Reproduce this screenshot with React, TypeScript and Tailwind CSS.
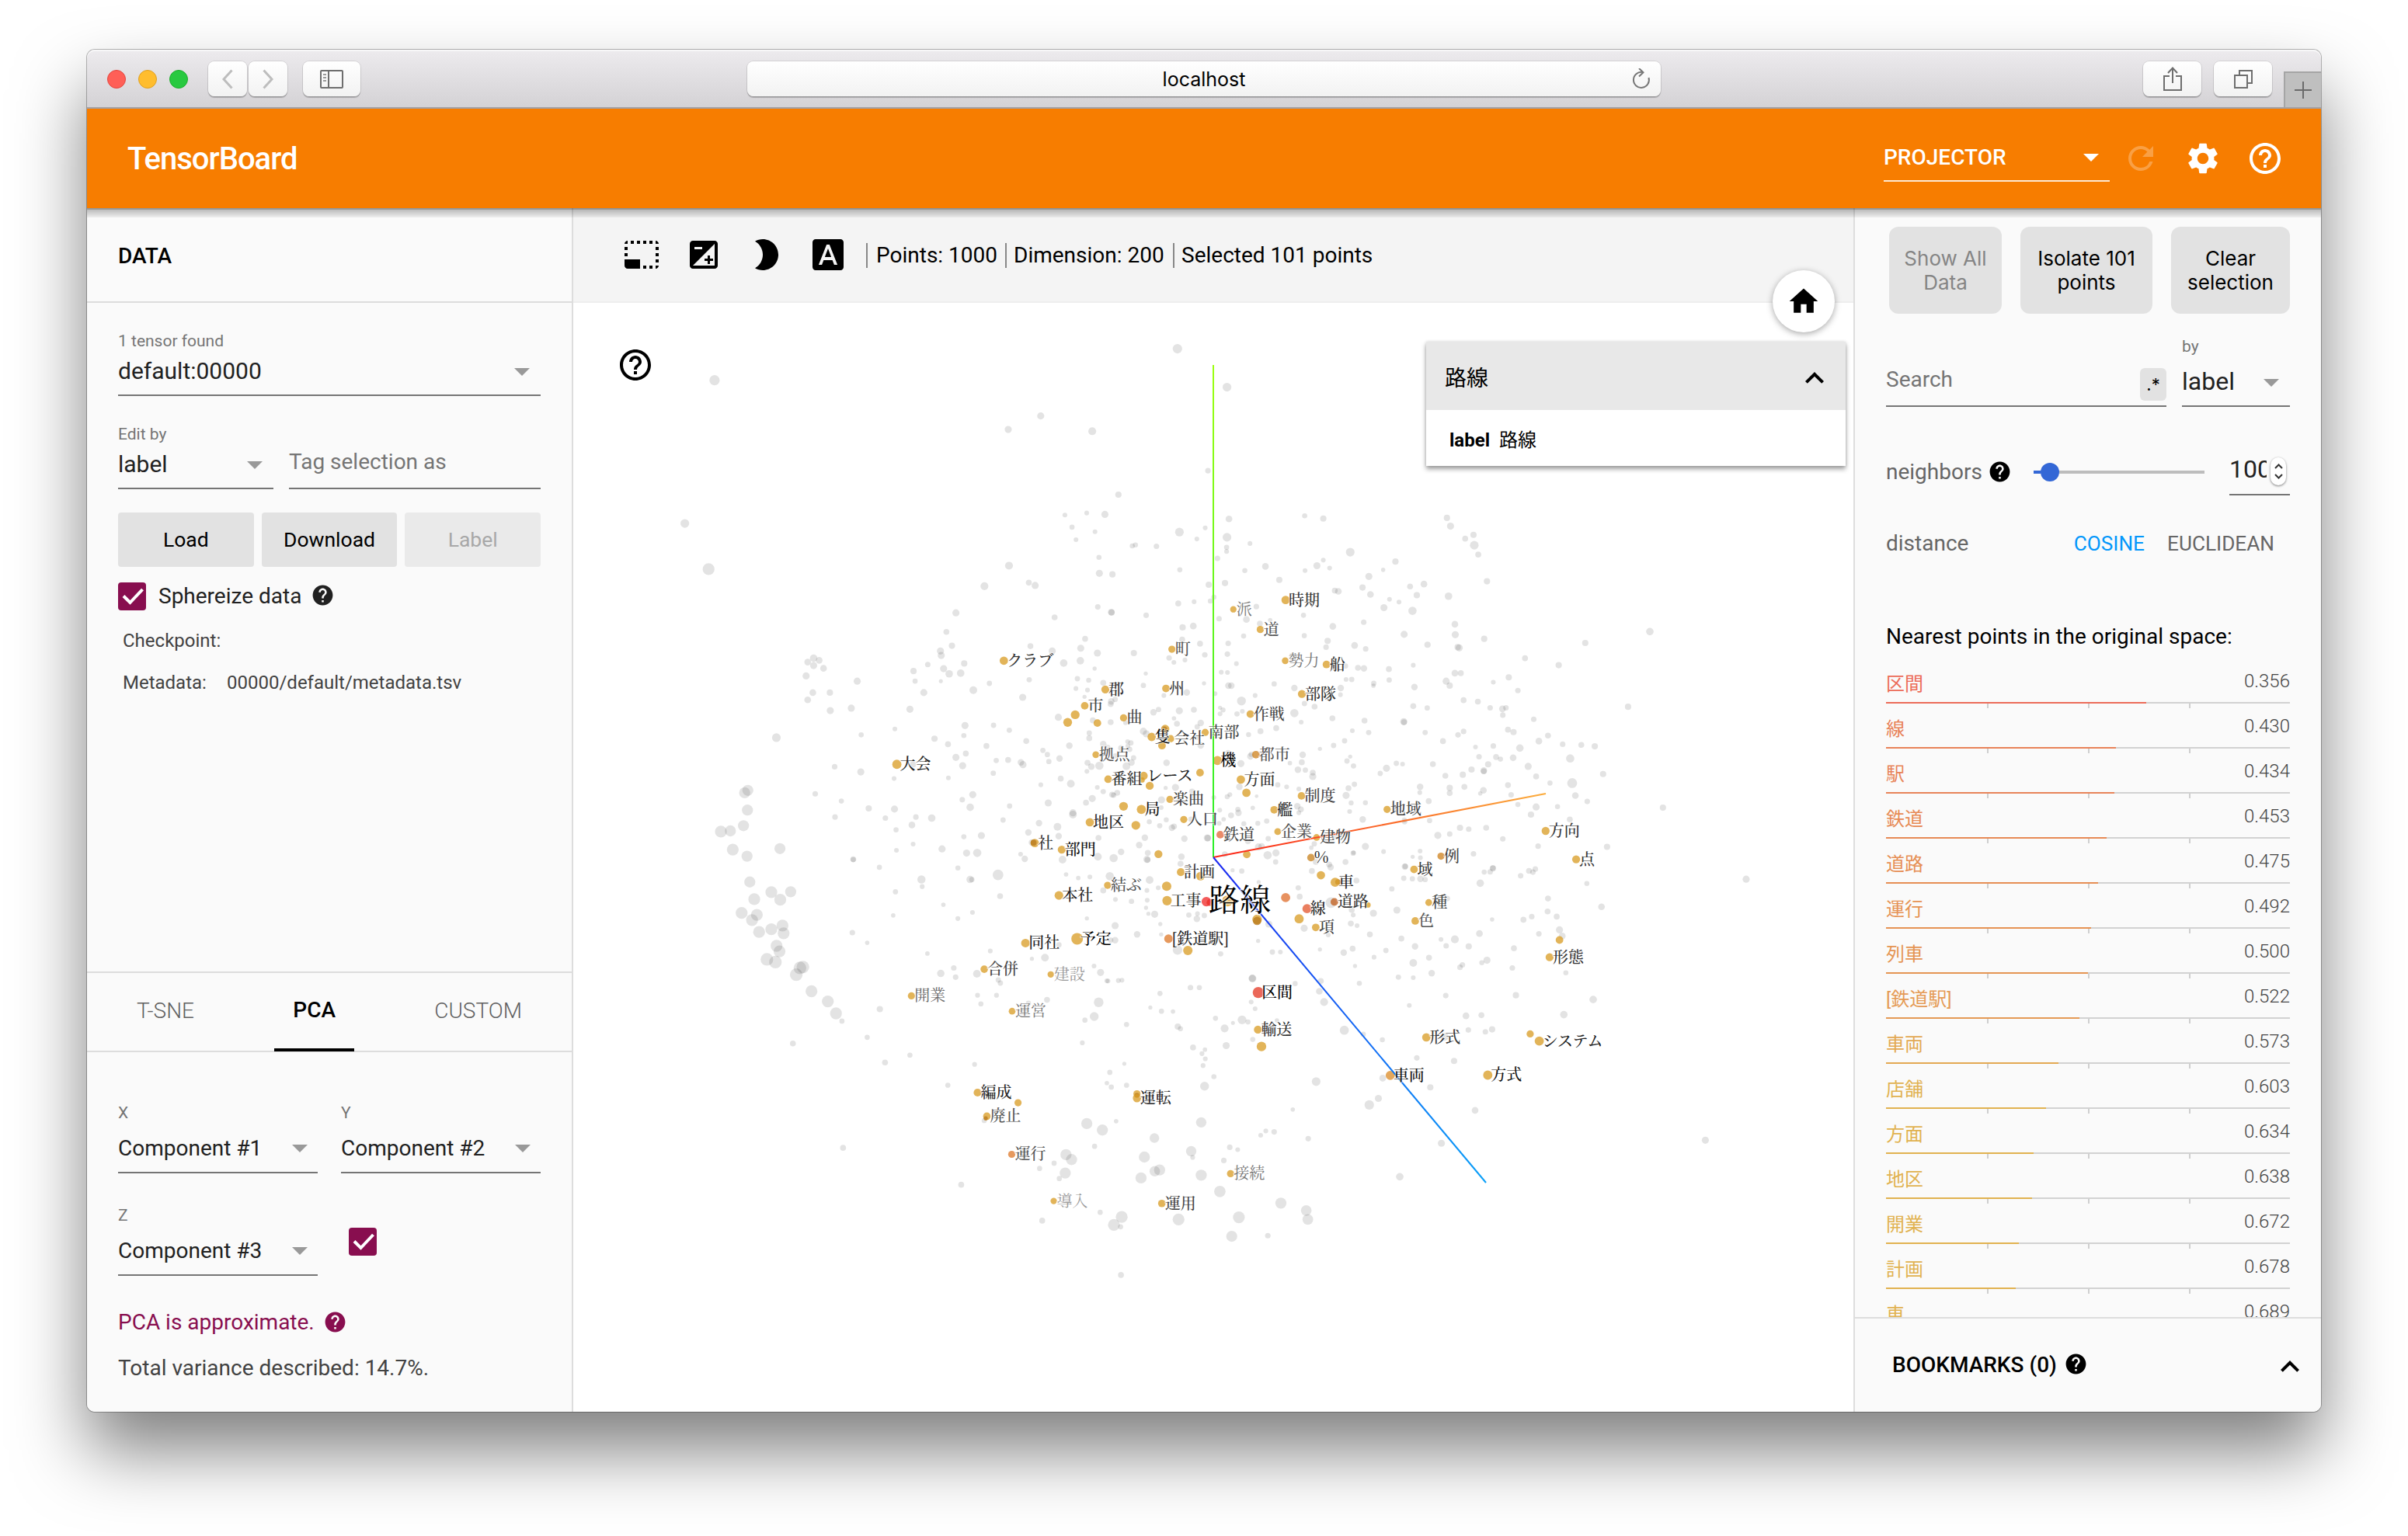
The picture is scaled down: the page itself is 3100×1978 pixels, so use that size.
import type { ReactNode } from 'react';
import {
  MdBrightness2,
  MdExpandLess,
  MdExposure,
  MdFontDownload,
  MdHelp,
  MdHelpOutline,
  MdHome,
  MdPhotoSizeSelectSmall,
  MdRefresh,
  MdSettings,
} from 'react-icons/md';

/* ---------- Scatter data ---------- */

// A region of the scene: its origin, its horizontal and vertical scale,
// its background points as "x,y,diameter" and its highlighted points.
type Mark = [x: number, y: number, d: number, text?: string, ink?: string, fill?: string];
type Region = { ox: number; oy: number; sx: number; sy: number; points: string; marks: Mark[] };

const GOLD = '#d99e27';
const DEEP = '#b97a1e';

const REGIONS: Region[] = [
  {
    ox: 850, oy: 420, sx: 1.96, sy: 2.24,
    points: `1305,65,24 137,156,26 960,259,18 878,298,18 1090,303,20 62,569,22 122,701,30 1156,486,16 1122,543,18 1076,539,12 1021,545,12
      1039,580,13 1097,593,12 1049,616,12 1310,594,22 1354,614,12 1252,635,14 1199,631,13 1191,634,13 1107,667,13 880,691,20 1108,713,18
      1141,716,16 1311,703,13 818,750,20 930,740,15 946,748,18 746,827,18 1104,810,14 1138,825,17 1139,826,16 1307,800,15 1347,795,12
      1226,834,14 995,840,15 722,882,15 736,922,16 707,937,18 709,950,18 1072,902,15 934,923,15 989,937,18 1061,929,18 1103,943,18
      1195,943,16 1318,869,16 1345,865,17 1317,904,15 1362,916,15 1284,957,14 1296,970,12 1324,963,12 1018,972,19 1060,965,19
      387,958,19 401,964,17 372,969,17 387,979,18 412,987,17 368,1009,18 497,1024,18 385,1057,17 428,1057,16 372,1078,17 482,1102,18
      429,1109,18 639,995,16 643,1024,13 675,976,14 715,988,18 729,1003,19 758,1001,19 767,973,16 708,1024,10 665,1057,18 630,1105,18
      592,1162,12 507,1179,13 293,1187,22 692,1190,16 726,1206,15 769,1152,18 766,1181,13 440,1271,14 506,1286,18 638,1264,16 590,1305,12
      746,1244,18 771,1233,15 763,1268,18 727,1303,12 391,1349,14 457,1370,13 526,1391,16 591,1393,18 441,1416,14 568,1419,14 645,1416,14
      685,1419,19 635,1439,17 595,1453,13 762,1366,14 782,1388,19 638,1494,12 596,1512,12 766,1473,13 711,1508,18 773,1520,18 553,1561,13
      487,1538,15 487,1539,13 751,1563,13 221,1339,28 213,1346,28 220,1396,28 210,1441,28 177,1456,28 153,1458,30 183,1510,30 302,1507,28
      219,1529,28`,
    marks: [
      [867, 965, 20, 'クラブ', '#333'], [1291, 932, 17, '町', '#555'], [1123, 1048, 19, '郡', '#333'], [1276, 1045, 18, '州', '#444'],
      [1071, 1095, 18, '市', '#444'], [1047, 1121, 21], [1028, 1143, 21], [1103, 1145, 18], [1169, 1130, 17, '曲', '#444'],
      [1274, 1162, 20], [1272, 1164, 15, '', '', DEEP], [1288, 1190, 17, '会社', '#444'], [1266, 1210, 18], [1240, 1185, 20, '隻', '#111'],
      [1099, 1236, 16, '拠点', '#555'], [597, 1264, 22, '大会', '#222'], [1216, 1309, 12], [1130, 1307, 18, '番組', '#333'],
      [1220, 1297, 19, 'レース', '#222'], [1235, 1326, 19], [1362, 1288, 18], [1286, 1365, 17, '楽曲', '#444'], [1169, 1385, 21],
      [1214, 1394, 22, '局', '#111'], [1084, 1431, 20, '地区', '#222'], [1200, 1440, 21], [1321, 1423, 17, '人口', '#444'],
      [945, 1491, 20, '社', '#333'], [942, 1490, 14, '', '', DEEP], [1013, 1510, 19, '部門', '#111'], [1257, 1523, 19],
    ],
  },
  {
    ox: 1550, oy: 420, sx: 1.96, sy: 2.24,
    points: `58,176,22 10,417,14 63,556,17 254,547,13 301,555,16 3,582,12 58,609,22 57,638,13 57,650,12 116,627,12 34,670,14 369,652,22
      155,693,17 103,705,13 285,691,18 301,675,12 317,698,12 255,705,12 483,679,16 452,703,11 416,722,18 190,732,16 12,746,16 53,741,16
      330,763,15 339,765,17 400,754,16 420,774,17 520,751,15 555,744,17 537,776,16 468,788,12 492,796,12 454,812,18 526,821,21 613,553,16
      622,577,18 659,613,15 680,602,16 682,632,22 692,659,15 714,736,16 617,779,19 25,782,13 16,793,13 132,809,14 38,844,14 107,846,17
      167,848,11 251,834,13 403,854,14 141,858,15 325,866,17 100,894,13 253,893,13 505,889,18 633,860,17 634,890,18 707,902,16 61,915,14
      312,908,16 308,926,14 380,921,17 408,931,14 564,919,16 640,926,16 644,928,18 59,946,14 2,948,14 962,914,16 1125,881,19
      810,958,15 895,978,16 633,1001,17 648,1001,15 769,1013,16 730,1027,12 611,1024,18 620,1037,16 792,1051,14 655,1079,15 691,1083,15
      1070,1098,16 722,1101,14 753,1104,17 762,1101,14 754,1122,14 832,1134,14 655,1169,14 641,1179,14 767,1164,15 781,1171,16 603,1197,15
      868,1181,15 845,1197,17 905,1206,14 952,1208,15 986,1212,16 685,1214,12 730,1211,14 797,1217,19 694,1242,14 737,1243,15 748,1249,13
      780,1245,17 717,1264,16 924,1247,21 818,1270,18 675,1279,16 706,1282,17 706,1284,15 653,1294,16 609,1297,15 838,1299,15 1007,1292,16
      873,1318,13 929,1318,25 767,1324,15 657,1329,15 620,1332,16 620,1347,15 705,1339,17 697,1348,11 775,1352,14 937,1354,17 967,1371,14
      792,1380,13 838,1387,18 892,1386,13 1158,1389,16 825,1409,16 923,1423,15 646,1447,16 668,1451,14 712,1447,15 620,1465,14 590,1469,18
      754,1479,14 843,1500,14 1017,1502,16 680,1522,14 729,1563,14`,
    marks: [
      [206, 790, 20, '時期', '#333'], [74, 817, 15, '派', '#777'], [142, 875, 17, '道', '#555'], [205, 965, 16, '勢力', '#777'],
      [309, 976, 18, '船', '#333'], [247, 1061, 19, '部隊', '#333'], [117, 1119, 18, '作戦', '#444'], [131, 1236, 18, '都市', '#555', '#cf8420'],
      [93, 1308, 20, '方面', '#333'], [107, 1346, 20], [246, 1355, 18, '制度', '#444'], [177, 1395, 18, '艦', '#222'],
      [462, 1394, 17, '地域', '#444'], [186, 1458, 16, '企業', '#555'], [284, 1475, 16, '建物', '#444'],
      [41, 1467, 18, '鉄道', '#444', '#e4683a'], [862, 1456, 19, '方向', '#333'], [939, 1538, 19, '点', '#333'],
      [598, 1529, 17, '例', '#444', '#cf8420'], [108, 1524, 18], [270, 1533, 18, '%', '#222', '#c98420'], [3, 1172, 17, '南部', '#444'],
      [34, 1253, 22, '機', '#000'],
    ],
  },
  {
    ox: 1250, oy: 850, sx: 2.6133, sy: 3,
    points: `62,90,18 416,33,14 196,76,18 588,52,14 174,144,24 8,116,26 358,72,18 396,78,17 353,110,16 445,88,20 392,116,16 472,160,22
      485,152,18 470,170,20 294,221,24 382,142,14 580,98,18 726,125,22 649,137,16 614,202,22 631,191,18 701,196,24 750,192,20 683,225,15
      693,246,20 773,243,22 761,258,18 410,233,20 470,240,20 520,242,16 784,90,14 842,47,16 863,48,16 866,99,22 876,99,22 821,130,16
      910,158,30 893,14,16 956,137,16 838,184,14 848,193,17 838,208,16 895,208,18 913,198,16 1020,92,18 1088,108,22 1122,168,18 1156,180,20
      1088,205,28 1111,240,16 1027,263,20 974,275,20 934,288,17 1244,108,22 1243,134,16 1222,30,20 1260,23,18 1281,75,18 1262,75,16
      1302,30,20 1322,32,22 1406,35,20 1407,77,18 1488,20,16 1492,104,22 1355,90,18 1354,99,15 1488,178,20 1535,185,18 1324,234,20
      1216,225,20 1456,238,24 1457,240,20 1528,280,18 1283,273,16 1338,280,18 1257,312,18 1220,330,18 76,252,18 129,271,18 398,282,18
      398,302,20 445,325,22 186,313,20 52,332,20 580,275,24 590,285,24 538,320,18 527,315,16 528,332,16 534,345,18 505,340,20 460,337,18
      242,349,18 257,365,18 331,331,22 298,380,22 85,388,18 125,386,20 168,395,22 175,404,24 75,437,18 262,392,18 392,397,20 405,412,22
      432,408,28 390,430,16 523,410,26 540,396,22 547,378,18 486,370,18 658,397,22 865,360,22 881,372,18 943,364,18 940,372,22 908,400,24
      875,395,16 773,330,22 760,300,16 1174,343,14 1116,366,22 1113,395,20 1100,424,22 1150,450,24 1125,425,18 1150,435,20 1073,398,15
      1276,373,14 1265,390,18 1287,409,18 1377,438,18 1398,418,24 1431,399,18 1452,402,16 1554,402,20 1511,490,22 1510,512,16 235,482,16
      302,458,20 336,478,26 655,494,14 688,492,24 6,520,24 130,564,18 260,552,24 387,551,20 343,590,24 343,597,26 408,535,24 425,492,16
      445,508,18 475,520,20 480,522,18 492,513,20 641,540,24 640,570,16 700,540,18 744,508,20 746,531,18 817,531,16 862,528,17 871,520,16
      903,490,22 1032,482,18 1103,498,16 1062,490,16 1290,480,18 1270,495,20 1262,523,24 1279,552,17 1327,551,17 1274,585,16 1318,616,22
      1430,580,16 1458,618,17 1459,625,18 1540,545,20 1543,620,18 961,526,12 948,571,15 837,580,16 898,577,18 900,590,22 875,600,20
      850,615,15 918,632,17 965,631,17 835,631,16 1098,565,22 1110,577,20 1103,590,16 995,622,18 108,618,18 229,630,22 291,644,26
      193,666,22 35,678,24 295,680,22 167,750,16 181,768,22 21,745,28 205,705,22 429,687,20 427,760,26 480,765,28 505,741,22 566,715,22
      585,686,22 600,625,17 657,617,17 676,648,22 683,643,20 718,690,22 795,687,24 797,688,22 740,615,18 635,640,18 308,771,26 592,770,24
      594,772,20 595,745,20 708,760,22 705,787,20 91,830,36 320,828,15 361,842,15 400,838,16 467,835,28 601,850,26 3,848,18 854,750,20
      932,700,20 967,722,24 978,720,22 998,754,28 880,812,14 911,815,18 1026,745,24 1025,780,18 1000,690,18 1068,687,16 1155,710,18
      1160,780,20 1131,664,18 1145,725,15 1228,680,22 1327,720,24 1286,746,18 1287,744,15 1388,740,16 1205,790,20 1210,800,22 1147,815,20
      1460,798,22 1461,797,18 1486,760,14 1512,764,16 1511,738,16 1456,843,18 1485,845,18 1512,845,22 1528,848,18 1260,780,20 98,912,20
      5,975,16 445,890,20 486,925,16 540,932,18 592,890,16 630,880,16 593,928,16 589,957,14 597,980,14 618,982,24 968,858,14 966,945,16
      1101,880,18 1106,914,20 1297,852,20 1211,937,36 1281,965,20 1278,1018,20 1299,1026,16 1286,985,16 1354,978,24 1433,966,24 1416,884,18
      1396,1122,18 762,980,16 733,985,18 760,1000,22 785,987,18 1002,1020,24 966,1085,14 637,1020,14 640,1060,14 559,1060,22 485,1026,24
      485,1082,22 470,1082,18 296,1100,18 390,998,14 65,1124,16 205,1154,14 249,1150,26 20,1212,26 92,1236,18 99,1248,18 436,1207,24
      414,1182,16 461,1240,16 508,1237,16 695,1120,32 840,1135,18 1121,1036,24 1174,1118,14 1202,1062,16 1014,1128,18 1041,1128,16
      1284,1115,20 1254,1130,22 1356,1148,16 1342,1060,20 1448,1076,20 1494,1106,22 1488,1170,26 1292,1182,14 1488,1227,16 1550,1210,22
      947,1230,26 1177,1240,20 1438,1225,18 1541,1150,20`,
    marks: [],
  },
  {
    ox: 850, oy: 1080, sx: 2.0907, sy: 2.529,
    points: `241,141,30 253,197,32 299,174,32 323,199,32 351,173,30 219,242,32 247,265,32 260,248,32 266,304,32 299,295,32 329,283,32
      332,308,32 313,349,32 321,367,32 287,393,34 310,402,34 376,421,34 384,418,34 366,443,34 407,497,32 451,530,32 473,569,32 703,133,22
      705,156,13 834,133,20 633,173,14 762,215,12 801,260,13 627,250,12 517,306,15 557,339,12 719,374,12 790,421,15 795,451,15 755,439,20
      591,555,17 489,594,14 357,667,16 557,647,14 605,729,16 672,705,14 774,803,14 492,1007,16 810,1127,16 846,735,13 854,510,13 863,538,14
      905,510,13 991,536,14 1041,525,16 1180,533,26 1168,579,24 1143,591,14 1255,605,14 1345,504,14 1427,485,15 1451,485,14 1319,550,11
      1349,562,14 1380,563,12 1393,612,17 1400,619,14 1136,665,13 1434,680,16 1466,687,12 1458,700,13 1467,717,13 1461,739,13 1249,733,11
      1210,761,14 1202,796,12 1214,809,14 1255,803,14 1465,806,24 1148,928,30 1190,949,30 1227,920,12 1330,975,26 1456,924,28 1092,1029,30
      1107,1045,30 1169,1002,14 1060,1057,14 1021,1074,14 1090,1089,30 1074,1107,14 1303,1037,30 1344,1079,30 1331,1083,28 1294,1105,30
      1429,1018,28 1433,1038,13 1456,1096,30 1184,1217,14 1242,1232,32 1221,1258,32 1239,1264,14 1028,1244,16 1395,1240,32 1240,1421,16
      872,918,14 1233,462,13 1202,463,13`,
    marks: [
      [1454, 122, 22], [1401, 109, 20, '計画', '#333'], [1204, 152, 18, '結ぶ', '#555'], [1073, 185, 22, '本社', '#222'], [1363, 155, 24],
      [1364, 202, 24, '工事', '#333'], [983, 340, 22, '同社', '#222'], [1122, 326, 30, '予定', '#000'],
      [1368, 326, 22, '[鉄道駅]', '#222', '#de7a2c'], [1420, 364, 24], [872, 425, 19, '合併', '#444'], [1051, 442, 16, '建設', '#999'],
      [676, 512, 18, '開業', '#666'], [947, 562, 17, '運営', '#777'], [854, 827, 20, '編成', '#222'], [963, 860, 18],
      [879, 904, 19, '廃止', '#555'], [876, 911, 10, '', '', DEEP], [1283, 831, 18], [1283, 836, 12, '', '', DEEP],
      [1283, 845, 21, '運転', '#222'], [946, 1028, 18, '運行', '#555', '#de7a2c'], [1059, 1180, 16, '導入', '#999'],
      [1350, 1188, 19, '運用', '#444'],
    ],
  },
  {
    ox: 1500, oy: 1080, sx: 1.96, sy: 2.529,
    points: `805,109,13 827,97,16 820,108,14 918,105,15 934,99,14 928,109,14 897,121,14 795,145,19 1064,146,13 1466,132,18 966,195,15
      965,237,15 1101,222,17 925,254,14 904,264,15 825,263,11 988,254,15 995,297,18 1002,317,17 793,309,17 943,310,14 731,328,20 696,328,12
      709,349,14 766,351,16 880,357,15 812,396,18 799,404,13 750,411,14 744,419,14 876,421,14 712,195,14 1011,437,13 885,510,16 708,511,14
      1080,524,19 389,497,17 401,532,20 217,532,12 227,554,12 616,543,12 759,577,17 798,575,15 1006,573,19 194,590,22 209,597,13 171,600,10
      282,592,11 127,585,13 150,618,20 452,624,23 500,637,13 548,655,13 221,654,13 154,674,18 765,623,14 808,629,14 825,621,16 705,645,20
      635,714,14 729,724,16 669,810,16 549,780,17 782,885,17 381,791,22 538,846,18 515,867,24 123,775,13 322,882,11 254,952,12 275,955,14
      241,966,12 361,977,14 697,992,18 592,1101,19 1363,982,18 163,1005,14 183,1013,12 148,1048,14 138,1149,29 292,1187,28 356,1211,27
      360,1240,27 186,1233,30 168,1295,28 259,1293,14 220,455,18 328,472,13 490,471,13`,
    marks: [
      [628, 100, 18, '域', '#333'], [393, 119, 20], [436, 141, 13, '', '', DEEP], [429, 142, 22, '車', '#222'],
      [512, 216, 12], [427, 206, 18, '道路', '#333', '#c25f1c'], [665, 208, 16, '種', '#444'], [631, 268, 18, '色', '#555'],
      [304, 192, 22, '', '', '#e0702f'], [358, 228, 22, '線', '#222', '#e4582f'], [338, 261, 22], [380, 289, 18, '項', '#444'],
      [232, 263, 23], [232, 268, 20, '', '', DEEP], [995, 330, 18], [970, 386, 19, '形態', '#333'],
      [235, 501, 27, '区間', '#000', '#e53b27'], [234, 622, 19, '輸送', '#333'], [243, 677, 23], [659, 647, 20, '形式', '#333'],
      [921, 636, 17], [944, 659, 22, 'システム', '#222'], [568, 771, 22, '車両', '#111', '#dc8d2a'], [814, 770, 22, '方式', '#111'],
      [157, 203, 26], [113, 208, 16, '', '', '#d8431a'], [104, 205, 23, '', '', '#f02a2a'], [165, 1091, 17, '接続', '#777'],
    ],
  },
];

function Scatter() {
  return (
    <svg className="absolute inset-0 size-full" viewBox="738 390 1648 1428">
      <defs>
        <linearGradient id="axis-y" gradientUnits="userSpaceOnUse" x1="1562" y1="1104" x2="1562" y2="470">
          <stop offset="0" stopColor="#28ee28" />
          <stop offset="1" stopColor="#9cff10" />
        </linearGradient>
        <linearGradient id="axis-x" gradientUnits="userSpaceOnUse" x1="1562" y1="1104" x2="1990" y2="1022">
          <stop offset="0" stopColor="#fb2418" />
          <stop offset="1" stopColor="#fbac3c" />
        </linearGradient>
        <linearGradient id="axis-z" gradientUnits="userSpaceOnUse" x1="1562" y1="1104" x2="1913" y2="1523">
          <stop offset="0" stopColor="#1c28f0" />
          <stop offset="1" stopColor="#0aa0f8" />
        </linearGradient>
      </defs>
      <g fill="#000" fillOpacity={0.11}>
        {REGIONS.map((r) =>
          r.points.trim().split(/\s+/).map((p, i) => {
            const [x, y, d] = p.split(',').map(Number);
            return <circle key={`${r.ox}-${r.oy}-${i}`} cx={r.ox + x / r.sx} cy={r.oy + y / r.sy} r={d / r.sx / 2} />;
          }),
        )}
      </g>
      <g fillOpacity={0.77}>
        {REGIONS.map((r) =>
          r.marks.map(([x, y, d, , , fill], i) => (
            <circle key={`${r.ox}-${r.oy}-${i}`} cx={r.ox + x / r.sx} cy={r.oy + y / r.sy} r={d / r.sx / 2 + 0.3} fill={fill || GOLD} />
          )),
        )}
      </g>
      <g strokeWidth={2} fill="none">
        <path d="M1562 1104V470" stroke="url(#axis-y)" />
        <path d="M1562 1104L1990 1022" stroke="url(#axis-x)" />
        <path d="M1562 1104L1913 1523" stroke="url(#axis-z)" />
      </g>
      <g
        className="font-[family-name:'Noto_Serif_CJK_JP','Noto_Serif_JP',serif]"
        fontSize={20}
        stroke="#fff"
        strokeOpacity={0.6}
        strokeWidth={2}
        paintOrder="stroke"
      >
        {REGIONS.map((r) =>
          r.marks.map(([x, y, , text, ink], i) =>
            text ? (
              <text
                key={`${r.ox}-${r.oy}-${i}`}
                x={r.ox + x / r.sx + 4}
                y={r.oy + y / r.sy + 7}
                fill={ink}
                className={ink === '#777' || ink === '#999' || ink === '#666' ? 'font-normal' : 'font-medium'}
              >
                {text}
              </text>
            ) : null,
          ),
        )}
        <text x={1556} y={1172.5} fontSize={40} fill="#000" strokeWidth={3}>
          路線
        </text>
      </g>
    </svg>
  );
}

/* ---------- Small pieces ---------- */

function Caret({ className = 'text-[#999]' }: { className?: string }) {
  return (
    <svg width="20" height="10" viewBox="0 0 20 10" className={`shrink-0 ${className}`} fill="currentColor">
      <path d="M0 0h20L10 10z" />
    </svg>
  );
}

function Checkbox() {
  return (
    <span className="flex size-9 shrink-0 items-center justify-center rounded-[4px] bg-[#880e4f]">
      <svg width="36" height="36" viewBox="0 0 36 36" fill="none" stroke="#fff" strokeWidth="4">
        <path d="M7 17.500l8.500 8.500L31.500 9" />
      </svg>
    </span>
  );
}

function TallField({ label, value, className = '' }: { label: string; value: string; className?: string }) {
  return (
    <div className={`flex flex-col ${className}`}>
      <div className="text-[21px] leading-6 text-[#757575]">{label}</div>
      <div className="flex h-[59px] items-center justify-between border-b-2 border-[#757575] pr-[14px] pb-[5px] text-[30px] text-[#212121]">
        <span>{value}</span>
        <Caret className="mt-[3px] text-[#999]" />
      </div>
    </div>
  );
}

function AxisField({ label, value }: { label: string; value: string }) {
  return (
    <div className="flex w-[257px] flex-col">
      <div className="text-[21px] leading-6 text-[#757575]">{label}</div>
      <div className="flex h-[66px] items-center justify-between border-b-2 border-[#757575] pt-1 pr-[13px] text-[28px] text-[#212121]">
        <span>{value}</span>
        <Caret />
      </div>
    </div>
  );
}

function GreyButton({ children, disabled = false }: { children: ReactNode; disabled?: boolean }) {
  return (
    <button
      className={`flex h-[70px] flex-1 items-center justify-center rounded-[4px] text-[26.5px] ${
        disabled ? 'bg-[#eaeaea] text-[#a8a8a8]' : 'bg-[#e2e2e2] text-black'
      }`}
    >
      {children}
    </button>
  );
}

function ChromeButton({ children, className }: { children: ReactNode; className: string }) {
  return (
    <span
      className={`flex h-[45px] items-center justify-center rounded-[8px] bg-gradient-to-b from-white to-[#f2f2f2] shadow-[0_0_0_1px_rgba(0,0,0,0.09),0_2px_1px_rgba(0,0,0,0.22)] ${className}`}
    >
      {children}
    </span>
  );
}

/* ---------- Window chrome ---------- */

function TitleBar() {
  return (
    <div className="flex h-[76px] shrink-0 items-start rounded-t-[10px] border-b-2 border-[#a2a0a5] bg-gradient-to-b from-[#edebee] to-[#d4d2d5] shadow-[inset_0_2px_0_rgba(255,255,255,0.6)]">
      <div className="flex h-full w-[850px] items-start pt-[15px] pl-[26px]">
        <div className="flex h-[45px] items-center gap-4">
          <span className="size-6 rounded-full border border-[#e2463f] bg-[#ff5f57]" />
          <span className="size-6 rounded-full border border-[#dfa023] bg-[#ffbd2e]" />
          <span className="size-6 rounded-full border border-[#1dad2b] bg-[#28c940]" />
        </div>
        <div className="ml-[26px] flex gap-[2px]">
          <ChromeButton className="w-[50px]">
            <svg width="14" height="26" viewBox="0 0 14 26" fill="none" stroke="#bdbdbd" strokeWidth="3">
              <path d="M12.500 1.500L2 13l10.500 11.500" />
            </svg>
          </ChromeButton>
          <ChromeButton className="w-[50px]">
            <svg width="14" height="26" viewBox="0 0 14 26" fill="none" stroke="#bdbdbd" strokeWidth="3">
              <path d="M1.500 1.500L12 13 1.500 24.500" />
            </svg>
          </ChromeButton>
        </div>
        <ChromeButton className="ml-5 w-[74px]">
          <svg width="30" height="24" viewBox="0 0 30 24" fill="none" stroke="#6e6e6e" strokeWidth="2">
            <rect x="1" y="1" width="28" height="22" rx="1" />
            <path d="M11 1v22" />
            <path d="M4 6h4M4 10h4M4 14h4" stroke="#9a9a9a" />
          </svg>
        </ChromeButton>
      </div>
      <ChromeButton className="relative mt-[15px] w-[1176px] font-[family-name:Inter,sans-serif] text-[25px] text-black">
        <span className="pt-[2px]">localhost</span>
        <svg className="absolute right-3 top-[9px]" width="26" height="28" viewBox="0 0 26 28" fill="none" stroke="#767676" strokeWidth="2">
          <path d="M14.500 5A10 10 0 1 0 22.500 12" />
          <path d="M10 0l5.500 5.200L10 10.500" />
        </svg>
      </ChromeButton>
      <div className="flex h-full w-[850px] justify-end pt-[15px]">
        <ChromeButton className="w-[75px]">
          <svg width="24" height="32" viewBox="0 0 24 32" fill="none" stroke="#6e6e6e" strokeWidth="2">
            <path d="M8 12H1v18h22V12h-7" />
            <path d="M12 21V2M6 8l6-6.500L18 8" />
          </svg>
        </ChromeButton>
        <ChromeButton className="mr-[15px] ml-4 w-[75px]">
          <svg width="26" height="26" viewBox="0 0 26 26" fill="none" stroke="#6e6e6e" strokeWidth="2">
            <rect x="2" y="8" width="16" height="16" />
            <path d="M8 7V2h16v16h-5" />
          </svg>
        </ChromeButton>
        <div className="mt-[13px] flex h-[46px] w-12 items-center justify-center border-t-2 border-l-2 border-[#a5a5a5] bg-[#bfbfbf]">
          <svg width="22" height="22" viewBox="0 0 22 22" stroke="#6a6a6a" strokeWidth="2">
            <path d="M11 0v22M0 11h22" />
          </svg>
        </div>
      </div>
    </div>
  );
}

function AppHeader() {
  return (
    <header className="flex h-32 shrink-0 items-center justify-between bg-[#f77d00] pr-12 pl-[52px] text-white">
      <h1 className="pt-[1px] text-[40px] leading-none font-medium tracking-[-0.025em]">TensorBoard</h1>
      <div className="flex h-full items-start">
        <div className="mt-[34px] flex h-[60px] w-[291px] items-center justify-between border-b-2 border-[#fde9d3] pr-[14px]">
          <span className="text-[28px] font-medium">PROJECTOR</span>
          <Caret className="-mt-px text-white" />
        </div>
        <div className="mt-10 ml-4 flex gap-8 text-[48px]">
          <MdRefresh className="opacity-[0.27]" />
          <MdSettings />
          <MdHelpOutline />
        </div>
      </div>
    </header>
  );
}

/* ---------- Left panel ---------- */

function LeftPanel() {
  return (
    <aside className="flex w-[626px] shrink-0 flex-col border-r-2 border-[#ddd] bg-[#fafafa]">
      <div className="flex h-[122px] shrink-0 items-center border-b-2 border-[#ddd] pt-[3px] pl-10 text-[28px] font-medium text-black">
        DATA
      </div>
      <div className="flex flex-col px-10 pt-[37px]">
        <TallField label="1 tensor found" value="default:00000" />
        <div className="mt-[37px] flex items-end gap-5">
          <TallField label="Edit by" value="label" className="w-[200px]" />
          <div className="flex h-[59px] flex-1 items-center border-b-2 border-[#757575] pb-[10px] text-[28px] text-[#757575]">
            Tag selection as
          </div>
        </div>
        <div className="mt-[30px] flex gap-[10px]">
          <GreyButton>Load</GreyButton>
          <GreyButton>Download</GreyButton>
          <GreyButton disabled>Label</GreyButton>
        </div>
        <div className="mt-5 flex h-9 items-center text-[28px] text-[#212121]">
          <Checkbox />
          <span className="ml-4">Sphereize data</span>
          <MdHelp className="mt-[-3px] ml-[12px] text-[31px]" />
        </div>
        <div className="mt-[25px] flex flex-col gap-[26px] pl-[6px] text-[24px] leading-7 text-[#424242]">
          <div>Checkpoint:</div>
          <div className="flex">
            <span className="w-[134px]">Metadata:</span>
            <span>00000/default/metadata.tsv</span>
          </div>
        </div>
      </div>
      <div className="mt-auto flex h-[104px] items-stretch justify-between border-y-2 border-[#ddd] px-10 text-[28px] font-light text-[#616161]">
        <div className="flex items-center px-6 pb-[2px]">T-SNE</div>
        <div className="-mb-px flex items-center border-b-4 border-black px-6 pb-[2px] font-medium text-black">PCA</div>
        <div className="flex items-center px-6 pb-[2px]">CUSTOM</div>
      </div>
      <div className="flex flex-col px-10 pt-[66px] pb-[41px]">
        <div className="flex justify-between">
          <AxisField label="X" value="Component #1" />
          <AxisField label="Y" value="Component #2" />
        </div>
        <div className="mt-[42px] flex gap-10">
          <AxisField label="Z" value="Component #3" />
          <div className="mt-7">
            <Checkbox />
          </div>
        </div>
        <div className="mt-[45px] flex items-center text-[28px] leading-[30px] text-[#880e4f]">
          PCA is approximate.
          <MdHelp className="mt-[-2px] ml-[11px] text-[31px]" />
        </div>
        <div className="mt-[29px] text-[28px] leading-[30px] text-[#424242]">Total variance described: 14.7%.</div>
      </div>
    </aside>
  );
}

/* ---------- Projector stage ---------- */

function Stage() {
  return (
    <main className="relative flex w-[1648px] shrink-0 flex-col bg-white">
      <div className="flex h-[122px] shrink-0 items-center border-b-2 border-[#eee] bg-[#f4f4f4] pl-16 text-[28px] text-black">
        <div className="flex gap-8 text-[48px]">
          <MdPhotoSizeSelectSmall />
          <MdExposure />
          <MdBrightness2 />
          <MdFontDownload />
        </div>
        <div className="ml-[25px] flex items-center pt-px">
          <span className="h-8 border-l-2 border-[#888] pr-[11px]" />
          <span className="w-[166px]">Points: 1000</span>
          <span className="h-8 border-l-2 border-[#888] pr-[9px]" />
          <span className="w-[205px]">Dimension: 200</span>
          <span className="h-8 border-l-2 border-[#888] pr-[9px]" />
          <span>Selected 101 points</span>
        </div>
      </div>
      <div className="relative flex-1">
        <Scatter />
        <MdHelpOutline className="absolute top-14 left-14 text-[48px] text-black" />
        <div className="absolute top-[-42px] right-6 flex size-20 items-center justify-center rounded-full bg-white shadow-[0_2px_8px_rgba(0,0,0,0.35)]">
          <MdHome className="text-[44px] text-black" />
        </div>
        <div className="absolute top-[50px] right-[10px] flex w-[540px] flex-col bg-white text-black shadow-[0_4px_6px_rgba(0,0,0,0.38),0_0_4px_rgba(0,0,0,0.12)]">
          <div className="flex h-[88px] items-center justify-between bg-[#e8e8e8] pr-4 pl-6 text-[28px]">
            <span className="pt-[7px]">路線</span>
            <MdExpandLess className="mt-[5px] text-[48px]" />
          </div>
          <div className="flex h-[72px] items-center gap-3 pl-[30px] text-[24px] leading-7">
            <span className="pt-[5px] font-bold">label</span>
            <span className="pt-[5px]">路線</span>
          </div>
        </div>
      </div>
    </main>
  );
}

/* ---------- Right panel ---------- */

const NEIGHBORS: { label: string; distance: number; color: string }[] = [
  { label: '区間', distance: 0.356, color: '#ec6c59' },
  { label: '線', distance: 0.43, color: '#e88259' },
  { label: '駅', distance: 0.434, color: '#e88459' },
  { label: '鉄道', distance: 0.453, color: '#e78a55' },
  { label: '道路', distance: 0.475, color: '#e68e54' },
  { label: '運行', distance: 0.492, color: '#e69354' },
  { label: '列車', distance: 0.5, color: '#e59553' },
  { label: '[鉄道駅]', distance: 0.522, color: '#e59a55' },
  { label: '車両', distance: 0.573, color: '#e3a953' },
  { label: '店舗', distance: 0.603, color: '#e1b250' },
  { label: '方面', distance: 0.634, color: '#e1b250' },
  { label: '地区', distance: 0.638, color: '#e1b250' },
  { label: '開業', distance: 0.672, color: '#e1b250' },
  { label: '計画', distance: 0.678, color: '#e1b250' },
  { label: '車', distance: 0.689, color: '#e1b250' },
];

function NeighborRow({ label, distance, color }: (typeof NEIGHBORS)[number]) {
  return (
    <div className="relative h-[58px] shrink-0 border-b-2 border-[#d2d2d2]">
      <div className="flex items-start justify-between text-[24px] leading-7 font-light">
        <span className="mt-[19px] font-normal" style={{ color }}>
          {label}
        </span>
        <span className="mt-[15px] text-[#444]">{distance.toFixed(3)}</span>
      </div>
      <div className="absolute top-[56px] left-0 h-[2px]" style={{ width: `${(1 - distance) * 100}%`, backgroundColor: color }} />
      <div className="absolute top-[58px] left-[130px] h-[6px] w-[2px] bg-[#cfcfcf]" />
      <div className="absolute top-[58px] left-[260px] h-[6px] w-[2px] bg-[#cfcfcf]" />
      <div className="absolute top-[58px] left-[390px] h-[6px] w-[2px] bg-[#cfcfcf]" />
    </div>
  );
}

function ActionButton({ children, className }: { children: ReactNode; className: string }) {
  return (
    <button
      className={`flex h-28 items-center justify-center rounded-[12px] bg-[#e2e2e2] text-center font-[family-name:Inter,sans-serif] text-[26px] leading-[31.5px] ${className}`}
    >
      {children}
    </button>
  );
}

function RightPanel() {
  return (
    <aside className="flex w-[602px] shrink-0 flex-col border-l-2 border-[#ddd] bg-[#fafafa]">
      <div className="flex gap-6 pt-6 pl-11">
        <ActionButton className="w-[145px] text-[#858585]">
          Show All
          <br />
          Data
        </ActionButton>
        <ActionButton className="w-[170px] text-black">
          Isolate 101
          <br />
          points
        </ActionButton>
        <ActionButton className="w-[153px] text-black">
          Clear
          <br />
          selection
        </ActionButton>
      </div>
      <div className="flex min-h-0 flex-1 flex-col overflow-hidden px-10 pt-[30px]">
        <div className="flex items-end gap-5">
          <div className="flex h-[66px] w-[361px] items-center justify-between border-b-2 border-[#757575] text-[28px] text-[#757575]">
            <span className="pb-[3px]">Search</span>
            <span className="mt-[10px] flex h-[42px] w-[34px] items-center justify-center rounded-[6px] bg-[#e2e2e2] font-[family-name:Inter,sans-serif] text-[22px] text-black">
              .*
            </span>
          </div>
          <div className="flex flex-1 flex-col">
            <div className="text-[21px] leading-6 text-[#757575]">by</div>
            <div className="flex h-[66px] items-center justify-between border-b-2 border-[#757575] pt-[1px] pr-[14px] text-[32px] text-[#212121]">
              label
              <Caret className="mt-[5px] text-[#999]" />
            </div>
          </div>
        </div>
        <div className="mt-[62px] flex h-[52px] shrink-0 items-start justify-between">
          <div className="flex h-11 items-center">
            <span className="text-[28px] text-[#666]">neighbors</span>
            <MdHelp className="mt-[-2px] ml-[7px] text-[31px] text-black" />
            <div className="ml-[28px] flex items-center">
              <span className="h-1 w-[9px] bg-[#3367d6]" />
              <span className="size-6 rounded-full bg-[#3367d6]" />
              <span className="h-1 w-[187px] bg-[#bdbdbd]" />
            </div>
          </div>
          <div className="flex h-[52px] w-[78px] items-start border-b-2 border-[#757575]">
            <span className="flex h-[36px] w-12 items-center overflow-hidden text-[32px] text-[#212121]">100</span>
            <span className="mt-[3px] ml-[5px] flex h-9 w-[20px] flex-col items-center justify-center gap-[6px] rounded-[10px] bg-white shadow-[0_1px_3px_rgba(0,0,0,0.5)]">
              <svg width="11" height="7" viewBox="0 0 11 7" fill="none" stroke="#333" strokeWidth="2">
                <path d="M1 6l4.500-4.500L10 6" />
              </svg>
              <svg width="11" height="7" viewBox="0 0 11 7" fill="none" stroke="#333" strokeWidth="2">
                <path d="M1 1l4.500 4.500L10 1" />
              </svg>
            </span>
          </div>
        </div>
        <div className="mt-[46px] flex h-8 shrink-0 items-center pr-[20px] text-[26.2px]">
          <span className="flex-1 text-[28px] text-[#666]">distance</span>
          <span className="mr-[29px] pt-[2px] text-[#0397fb]">COSINE</span>
          <span className="pt-[2px] text-[#666]">EUCLIDEAN</span>
        </div>
        <div className="mt-[88px] mb-3 text-[28px] leading-8 text-black">Nearest points in the original space:</div>
        {NEIGHBORS.map((n) => (
          <NeighborRow key={n.label} {...n} />
        ))}
      </div>
      <div className="flex h-[122px] shrink-0 items-center border-t-2 border-[#ddd] pl-12 text-black">
        <span className="text-[28px] font-medium">BOOKMARKS (0)</span>
        <MdHelp className="mt-[-3px] ml-[9px] text-[31px]" />
        <MdExpandLess className="mt-[4px] mr-4 ml-auto text-[48px]" />
      </div>
    </aside>
  );
}

export default function App() {
  return (
    <div className="h-[1978px] w-[3100px] overflow-hidden bg-white pt-16 pl-28 font-[family-name:Roboto,'Noto_Sans_CJK_JP',sans-serif]">
      <div className="flex h-[1754px] w-[2876px] flex-col rounded-[10px] shadow-[0_0_0_1px_rgba(0,0,0,0.28),0_50px_90px_rgba(0,0,0,0.5)]">
        <TitleBar />
        <AppHeader />
        <div className="relative flex min-h-0 flex-1 overflow-hidden rounded-b-[10px]">
          <LeftPanel />
          <Stage />
          <RightPanel />
          <div className="absolute inset-x-0 top-0 h-3 border-t-2 border-black/35 bg-gradient-to-b from-black/25 to-black/5" />
        </div>
      </div>
    </div>
  );
}
